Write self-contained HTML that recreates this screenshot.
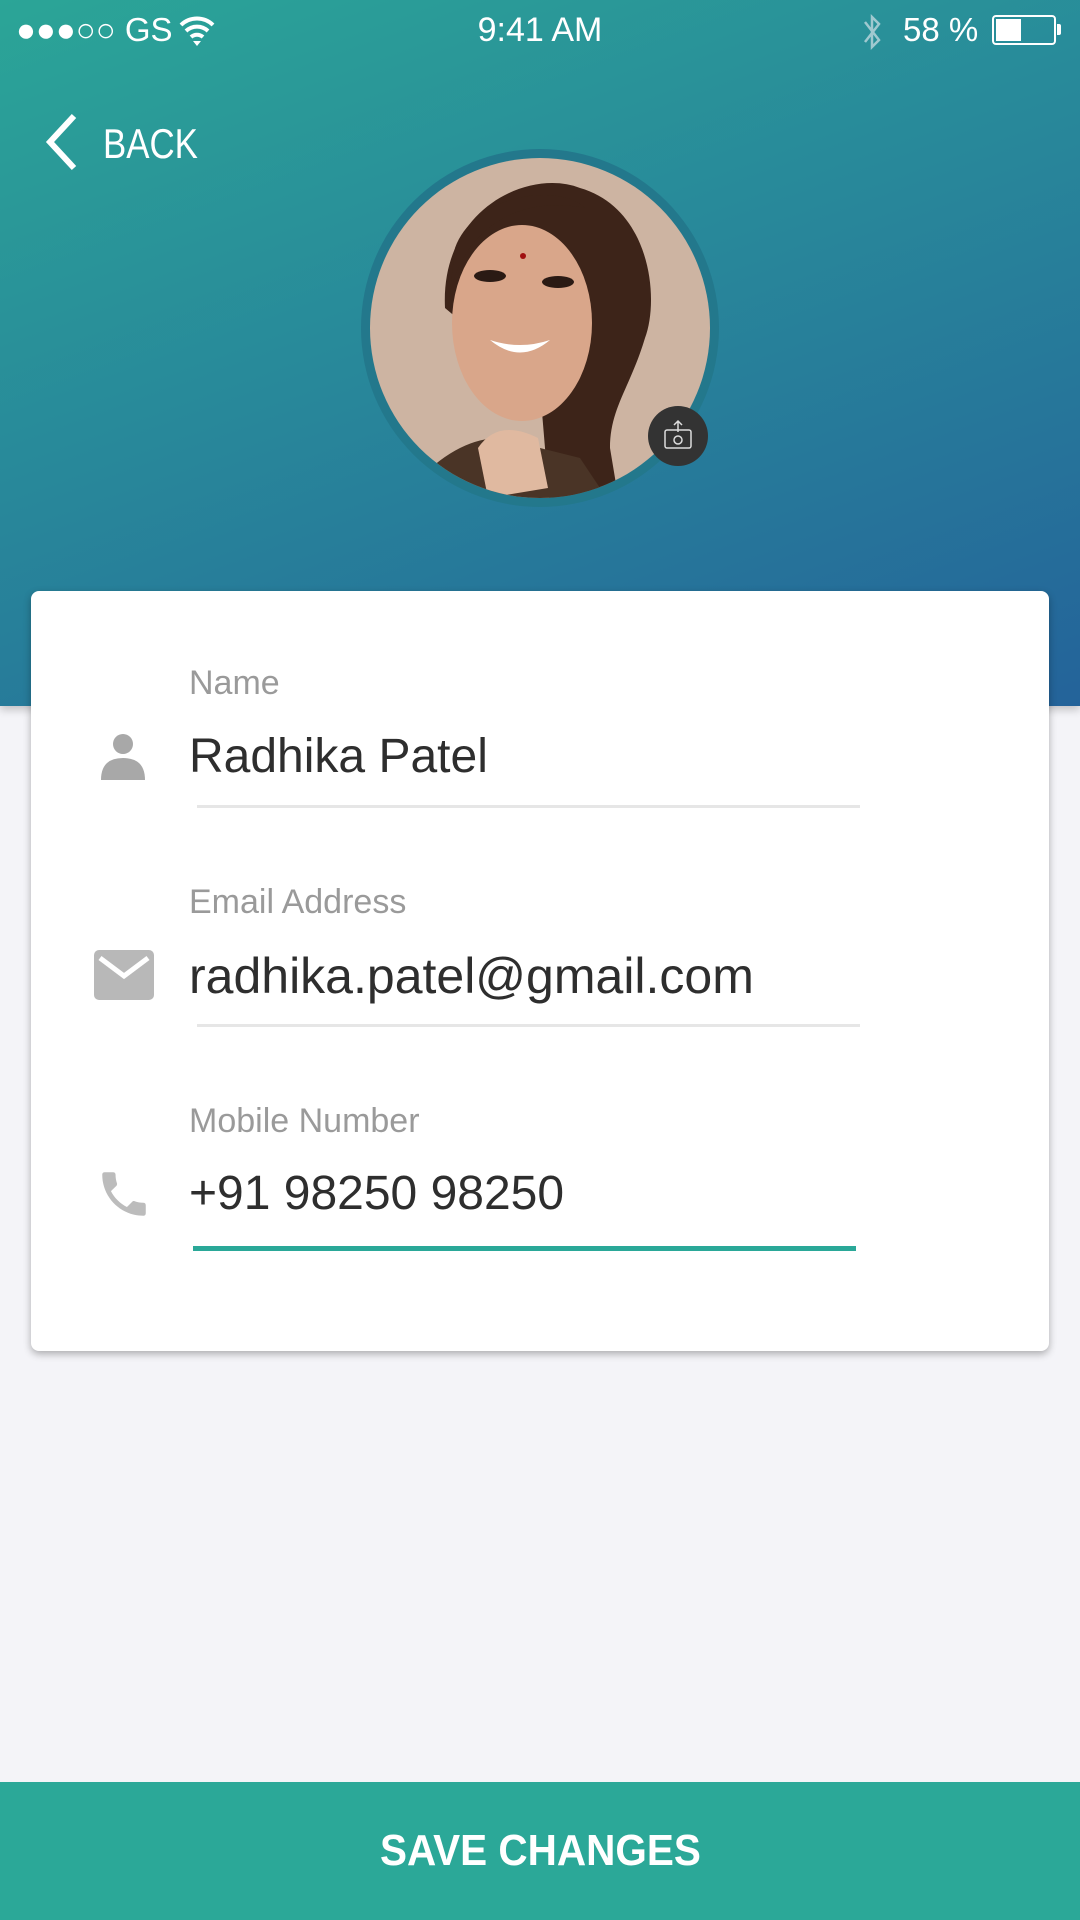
<!DOCTYPE html>
<html><head><meta charset="utf-8"><style>
*{margin:0;padding:0;box-sizing:border-box}
body{width:1080px;height:1920px;position:relative;overflow:hidden;background:#f4f4f8;font-family:"Liberation Sans",sans-serif}
.hdr{position:absolute;left:0;top:0;width:1080px;height:706px;background:linear-gradient(160deg,#2ba597 0%,#28889a 45%,#24639a 100%);box-shadow:0 4px 8px rgba(0,0,0,.2)}
.sb{position:absolute;top:8px;color:#fff;font-size:33px;height:44px;line-height:44px}
.card{position:absolute;left:31px;top:591px;width:1018px;height:760px;background:#fff;border-radius:8px;box-shadow:0 3px 8px rgba(0,0,0,.3)}
.lab{position:absolute;left:189px;color:#9a9a9a;font-size:34px}
.val{position:absolute;left:189px;color:#2e2e2e;font-size:48px}
.ln{position:absolute;left:197px;width:663px;height:3px;background:#e6e6e6}
.btn{position:absolute;left:0;top:1782px;width:1080px;height:138px;background:#2ba898;color:#fff;font-weight:bold;font-size:44px;text-align:center;line-height:138px}
</style></head><body>
<div class="hdr"></div>
<div class="sb" style="left:16px">●●●○○ GS</div>
<svg style="position:absolute;left:178px;top:14px" width="38" height="32" viewBox="0 0 38 32"><path d="M3 11a23 23 0 0 1 32 0M8 17a16 16 0 0 1 22 0M13 23a9 9 0 0 1 12 0" stroke="#fff" stroke-width="4" fill="none"/><path d="M15 27l4 5 4-5z" fill="#fff"/></svg>
<div class="sb" style="left:0;width:1080px;text-align:center;font-size:34px">9:41 AM</div>
<svg style="position:absolute;left:860px;top:12px" width="24" height="40" viewBox="0 0 24 40"><path d="M5 10l14 18-7 7V5l7 7-14 18" stroke="#9fc9d0" stroke-width="2.5" fill="none"/></svg>
<div class="sb" style="left:903px">58 %</div>
<div style="position:absolute;left:992px;top:15px;width:64px;height:30px;border:2px solid #fff;border-radius:4px"><div style="position:absolute;left:2px;top:2px;width:25px;height:22px;background:#fff"></div></div>
<div style="position:absolute;left:1057px;top:24px;width:4px;height:11px;background:#fff;border-radius:0 2px 2px 0"></div>
<svg style="position:absolute;left:40px;top:112px" width="40" height="60" viewBox="0 0 40 60"><path d="M34 4L10 30l24 26" stroke="#fff" stroke-width="6" fill="none"/></svg>
<div style="position:absolute;left:103px;top:120px;color:#fff;font-size:42px;transform:scaleX(.83);transform-origin:0 0">BACK</div>
<svg style="position:absolute;left:360px;top:148px" width="360" height="360" viewBox="0 0 360 360">
<defs><clipPath id="c"><circle cx="180" cy="180" r="170"/></clipPath></defs>
<circle cx="180" cy="180" r="179" fill="#23788c"/>
<g clip-path="url(#c)">
<rect width="360" height="360" fill="#cdb4a2"/>
<path d="M85 160C80 60 170 20 220 40 290 60 300 150 285 190 270 240 250 260 250 300L260 360H190L180 240Z" fill="#3d2419"/>
<ellipse cx="162" cy="175" rx="70" ry="98" fill="#d9a68a"/>
<path d="M88 160C95 90 150 45 225 60 200 35 115 45 95 100Z" fill="#3d2419"/>
<path d="M130 192q30 25 60 0q-30 10-60 0z" fill="#fff"/>
<ellipse cx="130" cy="128" rx="16" ry="6" fill="#2a1a14"/><ellipse cx="198" cy="134" rx="16" ry="6" fill="#2a1a14"/>
<circle cx="163" cy="108" r="3" fill="#a01010"/>
<path d="M60 330q40-40 80-40l80 20 40 60H60z" fill="#4a3426"/>
<path d="M118 300q20-30 60-10l10 50-60 10z" fill="#e0b9a0"/>
</g>
<circle cx="318" cy="288" r="30" fill="#333"/>
<rect x="305" y="282" width="26" height="18" rx="2" fill="none" stroke="#ddd" stroke-width="1.5"/><circle cx="318" cy="292" r="4" fill="none" stroke="#ddd" stroke-width="1.5"/><path d="M318 284v-11M314 277l4-4 4 4" stroke="#ddd" stroke-width="1.5" fill="none"/>
</svg>
<div class="card"></div>
<div class="lab" style="top:664px">Name</div>
<div class="val" style="top:729px">Radhika Patel</div>
<div class="ln" style="top:805px"></div>
<svg style="position:absolute;left:99px;top:732px" width="48" height="48" viewBox="0 0 48 48"><circle cx="24" cy="12" r="10" fill="#a8a8a8"/><path d="M2 48q0-22 22-22t22 22z" fill="#a8a8a8"/></svg>
<div class="lab" style="top:883px">Email Address</div>
<div class="val" style="top:947px;font-size:50px">radhika.patel@gmail.com</div>
<div class="ln" style="top:1024px"></div>
<svg style="position:absolute;left:94px;top:950px" width="60" height="50" viewBox="0 0 60 50"><rect width="60" height="50" rx="5" fill="#b8b8b8"/><path d="M6 8l24 18L54 8" stroke="#fff" stroke-width="5" fill="none"/></svg>
<div class="lab" style="top:1102px">Mobile Number</div>
<div class="val" style="top:1166px">+91 98250 98250</div>
<div style="position:absolute;left:193px;top:1246px;width:663px;height:5px;background:#2aa898"></div>
<svg style="position:absolute;left:95px;top:1165px" width="58" height="58" viewBox="0 0 24 24"><path d="M6.6 10.8c1.4 2.8 3.8 5.1 6.6 6.6l2.2-2.2c.3-.3.7-.4 1-.2 1.1.4 2.3.6 3.6.6.6 0 1 .4 1 1V20c0 .6-.4 1-1 1C10.6 21 3 13.4 3 4c0-.6.4-1 1-1h3.5c.6 0 1 .4 1 1 0 1.3.2 2.5.6 3.6.1.3 0 .7-.2 1z" fill="#bcbcbc"/></svg>
<div class="btn"><span style="display:inline-block;transform:scaleX(.92)">SAVE CHANGES</span></div>
</body></html>
